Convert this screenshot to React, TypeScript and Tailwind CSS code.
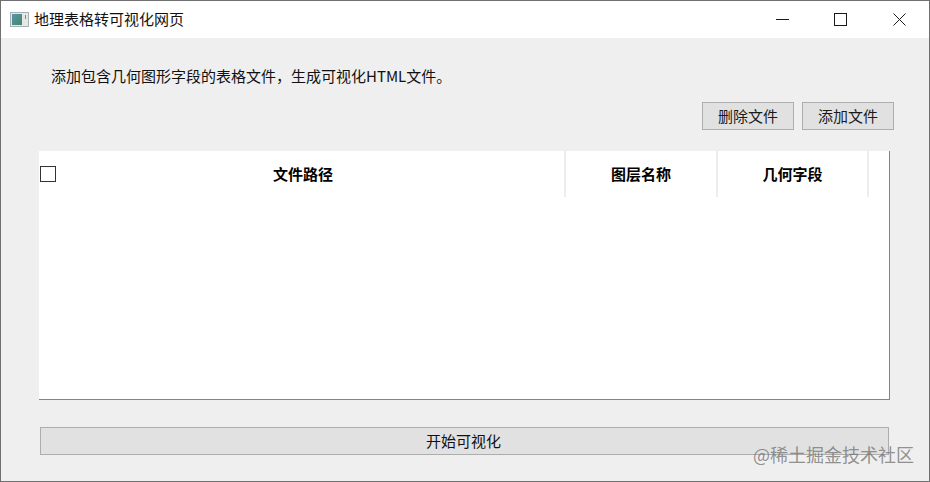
const fontStack = { fontFamily: '"Noto Sans CJK SC", "Liberation Sans", sans-serif' };

function AppIcon() {
  return (
    <svg width="19" height="15" viewBox="0 0 19 15" className="shrink-0">
      <defs>
        <linearGradient id="map" x1="0" y1="0" x2="1" y2="1">
          <stop offset="0" stopColor="#5d93a8" />
          <stop offset="1" stopColor="#3f8a6c" />
        </linearGradient>
      </defs>
      <rect x="0.5" y="0.5" width="18" height="14" fill="#e6e8e8" stroke="#a9b0b2" />
      <rect x="2" y="2" width="10" height="11" fill="url(#map)" />
      <rect x="15" y="3" width="1" height="4" fill="#7d8a8c" />
    </svg>
  );
}

// Windows caption buttons, 13px glyphs with square corners
function WindowControls() {
  return (
    <div className="ml-auto flex items-center text-[#1a1a1a]">
      <svg width="13" height="13" viewBox="0 0 13 13" className="mr-[45px]">
        <path d="M0 6.5H13" stroke="currentColor" fill="none" />
      </svg>
      <svg width="13" height="13" viewBox="0 0 13 13" className="mr-[46px]">
        <rect x="0.5" y="0.5" width="12" height="12" stroke="currentColor" fill="none" />
      </svg>
      <svg width="13" height="13" viewBox="0 0 13 13" className="mr-[23px]">
        <path d="M0.5 0.5L12.5 12.5M12.5 0.5L0.5 12.5" stroke="currentColor" fill="none" />
      </svg>
    </div>
  );
}

function SmallButton({ label }: { label: string }) {
  return (
    <button className="w-[92px] h-[28px] pb-[2px] bg-[#e1e1e1] border border-[#adadad] text-[15px] leading-none text-[#1a1a1a]">
      {label}
    </button>
  );
}

export default function App() {
  return (
    <div
      className="relative w-[930px] h-[482px] flex flex-col bg-[#efefef] border border-[#707070] overflow-hidden"
      style={fontStack}
    >
      {/* Title bar */}
      <div className="h-[37px] shrink-0 bg-white flex items-center pl-[9px]">
        <AppIcon />
        <span className="ml-[5px] text-[15px] text-[#111]">地理表格转可视化网页</span>
        <WindowControls />
      </div>

      {/* Body */}
      <div className="flex-1 flex flex-col pl-[38px] pr-[39px]">
        <p className="mt-[27px] ml-[12px] h-[22px] leading-[22px] text-[15px] text-[#111]">
          添加包含几何图形字段的表格文件，生成可视化HTML文件。
        </p>
        <div className="mt-[15px] flex justify-end gap-[8px] mr-[-4px]">
          <SmallButton label="删除文件" />
          <SmallButton label="添加文件" />
        </div>

        {/* Table */}
        <div className="mt-[21px] h-[249px] bg-white border-r border-b border-[#858585]">
          <div className="h-[46px] flex text-[15px] font-bold text-black">
            <div className="relative w-[527px] flex items-center justify-center border-r-2 border-[#ededed] pl-[3px]">
              <span className="absolute left-[1px] top-[15px] w-[16px] h-[16px] border border-[#333] bg-white" />
              文件路径
            </div>
            <div className="w-[152px] flex items-center justify-center border-r-2 border-[#ededed]">图层名称</div>
            <div className="w-[151px] flex items-center justify-center border-r-2 border-[#ededed]">几何字段</div>
          </div>
        </div>

        <button className="mt-[27px] ml-[1px] mr-[1px] h-[28px] pb-[2px] pr-[2px] bg-[#e1e1e1] border border-[#adadad] text-[15px] leading-none text-[#111]">
          开始可视化
        </button>
      </div>

      {/* Watermark */}
      <span className="absolute left-[752px] top-[441px] text-[18px] leading-[24px] text-[#777]/80 whitespace-nowrap">
        @稀土掘金技术社区
      </span>
    </div>
  );
}
